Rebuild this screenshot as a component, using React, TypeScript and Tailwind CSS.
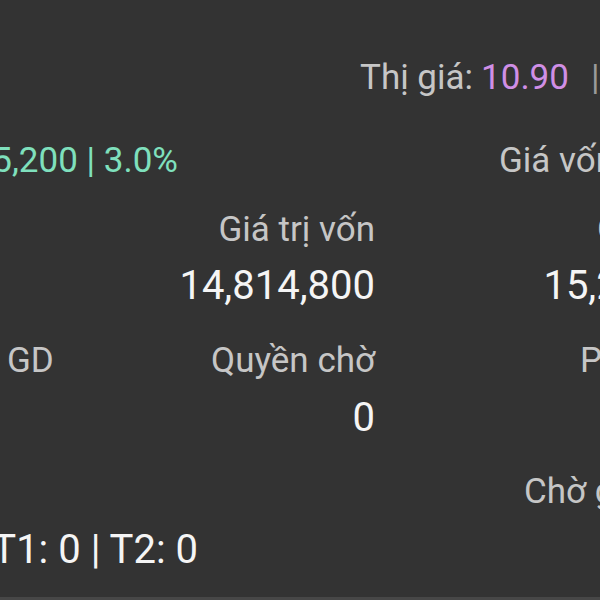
const font = { fontFamily: "Roboto, 'Noto Sans', sans-serif" };

type Cell = { label: string; value: string };

const gridRows: { gap: string; cells: Cell[] }[] = [
  {
    gap: "mt-[14px]",
    cells: [
      { label: "KL sở hữu", value: "1,400" },
      { label: "Giá trị vốn", value: "14,814,800" },
      { label: "Giá trị TT", value: "15,260,000" },
    ],
  },
  {
    gap: "mt-[15px]",
    cells: [
      { label: "KL khả dụng GD", value: "1,400" },
      { label: "Quyền chờ", value: "0" },
      { label: "Phong tỏa", value: "0" },
    ],
  },
];

export default function App() {
  return (
    <div className="h-[600px] w-[600px] overflow-hidden bg-[#333333]" style={font}>
      <div className="-ml-[194px] flex h-[597px] w-[933px] flex-col pt-[57px]">
        {/* header price */}
        <div className="flex h-[40px] items-center pl-[554px] text-[35px] leading-none">
          <span className="text-[#c6c6c6]">Thị giá:</span>
          <span className="ml-[8px] text-[#d08fe6]">10.90</span>
          <span className="ml-[22px] text-[#9a9a9a]">|</span>
          <span className="ml-[14px] text-[#7fe0bd]">+0.30</span>
        </div>

        {/* profit / cost */}
        <div className="mt-[43px] grid h-[40px] grid-cols-[372px_321px_1fr] items-center text-[35px] leading-none">
          <span className="whitespace-nowrap text-right text-[#7fe0bd]">+445,200 | 3.0%</span>
          <span />
          <span className="whitespace-nowrap text-[#c6c6c6]">Giá vốn TB: 10.58</span>
        </div>

        <div className="mt-[30px] flex flex-col gap-[33px]">
          {gridRows.map((row, i) => (
            <div key={i} className="grid grid-cols-[324px_245px_364px]">
              {row.cells.map((cell, j) => (
                <div key={j} className={j === 0 ? "whitespace-nowrap text-left" : "whitespace-nowrap text-right"}>
                  <div className="text-[35px] leading-[40px] text-[#c6c6c6]">{cell.label}</div>
                  <div className={`${row.gap} text-[40px] leading-[44px] text-[#f5f5f5]`}>{cell.value}</div>
                </div>
              ))}
            </div>
          ))}
        </div>

        {/* pending */}
        <div className="mt-[32px] grid grid-cols-[718px_1fr]">
          <div>
            <div className="h-[40px] text-[35px] leading-[40px] text-[#c6c6c6]">Chờ về</div>
            <div className="mt-[16px] whitespace-nowrap pl-[69px] text-[40px] leading-[44px] text-[#f5f5f5]">
              T0: 0 | T1: 0 | T2: 0
            </div>
          </div>
          <div className="whitespace-nowrap text-[35px] leading-[40px] text-[#c6c6c6]">Chờ giao dịch</div>
        </div>
      </div>
      <div className="h-[3px] bg-[#474747]" />
    </div>
  );
}
